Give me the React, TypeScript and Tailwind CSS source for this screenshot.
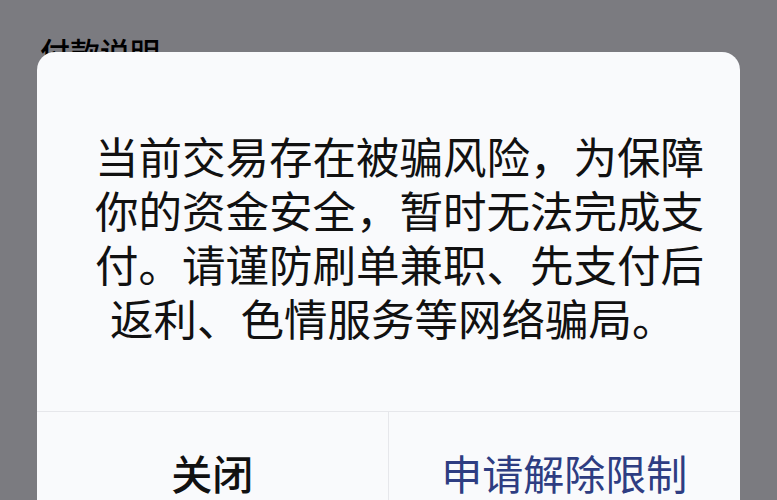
import React from "react";

const lines = [
  "当前交易存在被骗风险，为保障",
  "你的资金安全，暂时无法完成支",
  "付。请谨防刷单兼职、先支付后",
];

export default function App() {
  return (
    <div
      className="relative h-[500px] w-[777px] overflow-hidden bg-[#7b7b80]"
      style={{ fontFamily: '"Noto Sans CJK SC", "Noto Sans", sans-serif' }}
    >
      {/* page header behind the modal */}
      <div className="absolute left-[40px] top-[36px] text-[30px] font-medium leading-none text-black">
        付款说明
      </div>

      {/* alert dialog */}
      <div className="absolute left-[37px] top-[52px] w-[703px] overflow-hidden rounded-[18px] bg-[#f9fafc]">
        <div className="flex flex-col pb-[66px] pl-[58px] pt-[77px] text-[43.5px] leading-[54px] text-[#111111]">
          {lines.map((l) => (
            <div key={l} className="whitespace-nowrap">
              {l}
            </div>
          ))}
          <div className="whitespace-nowrap pl-[15px]">返利、色情服务等网络骗局。</div>
        </div>
        <div className="grid grid-cols-2 border-t border-[#e6e7eb]">
          <div className="flex h-[122px] items-center justify-center border-r border-[#e6e7eb] text-[41px] font-medium text-[#111111]">
            关闭
          </div>
          <div className="flex h-[122px] items-center justify-center text-[41px] text-[#2e3d82]">
            申请解除限制
          </div>
        </div>
      </div>
    </div>
  );
}
